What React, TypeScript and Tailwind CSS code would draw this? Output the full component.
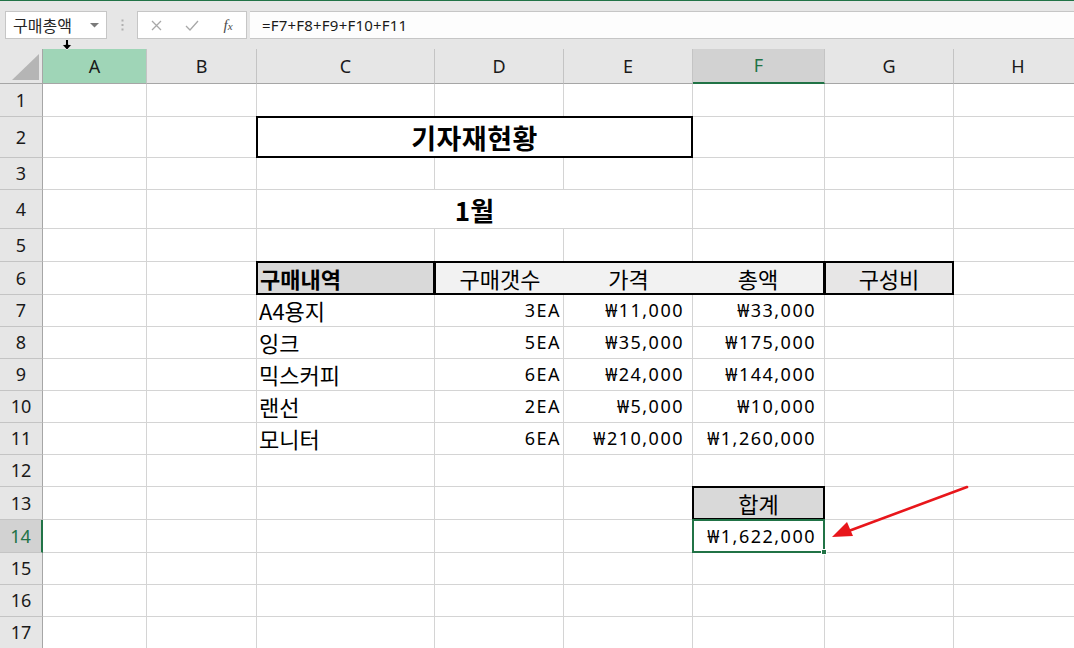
import React from 'react';

type Cell = { t: string; k: 'kr' | 'numD' | 'numE' };

const body: Record<string, Cell> = {
  '7-3': { t: 'A4용지', k: 'kr' },
  '7-4': { t: '3EA', k: 'numD' },
  '7-5': { t: '₩11,000', k: 'numE' },
  '7-6': { t: '₩33,000', k: 'numE' },
  '8-3': { t: '잉크', k: 'kr' },
  '8-4': { t: '5EA', k: 'numD' },
  '8-5': { t: '₩35,000', k: 'numE' },
  '8-6': { t: '₩175,000', k: 'numE' },
  '9-3': { t: '믹스커피', k: 'kr' },
  '9-4': { t: '6EA', k: 'numD' },
  '9-5': { t: '₩24,000', k: 'numE' },
  '9-6': { t: '₩144,000', k: 'numE' },
  '10-3': { t: '랜선', k: 'kr' },
  '10-4': { t: '2EA', k: 'numD' },
  '10-5': { t: '₩5,000', k: 'numE' },
  '10-6': { t: '₩10,000', k: 'numE' },
  '11-3': { t: '모니터', k: 'kr' },
  '11-4': { t: '6EA', k: 'numD' },
  '11-5': { t: '₩210,000', k: 'numE' },
  '11-6': { t: '₩1,260,000', k: 'numE' },
};

const cellText: Record<Cell['k'], string> = {
  kr: "justify-start pl-[2px] text-[22px] font-['Noto_Sans_CJK_KR',sans-serif]",
  numD: "justify-end pr-[2px] text-[18px] tracking-[1.5px] font-['Noto_Sans','Noto_Sans_CJK_KR',sans-serif]",
  numE: "justify-end pr-[8px] text-[18px] tracking-[1.5px] font-['Noto_Sans','Noto_Sans_CJK_KR',sans-serif]",
};

const COLS = ['', 'A', 'B', 'C', 'D', 'E', 'F', 'G', 'H'];

const GRID =
  'grid grid-cols-[43px_104px_110px_178px_129px_129px_132px_129px_129px] grid-rows-[35px_33px_41px_32px_39px_33px_33px_32px_32px_32px_32px_32px_32px_33px_33px_32px_32px_32px]';

function renderCell(r: number, c: number) {
  const key = `${r}-${c}`;
  if (r === 0 && c === 0) {
    return (
      <div key={key} className="relative bg-[#e6e6e6] border-r border-b border-r-[#a6a6a6] border-b-[#a6a6a6]">
        <svg width="42" height="34" className="absolute left-0 top-0">
          <polygon points="12,31 39,31 39,5" fill="#b5b5b5" />
        </svg>
      </div>
    );
  }
  if (r === 0) {
    let cls =
      "flex items-center justify-center bg-[#e6e6e6] border-r border-b border-r-[#c4c4c4] border-b-[#a6a6a6] text-[18px] text-[#1a1a1a] font-['Noto_Sans',sans-serif]";
    if (c === 1)
      cls =
        "flex items-center justify-center bg-[#9fd5b7] border-r border-b border-r-[#c4c4c4] border-b-[#a6a6a6] text-[18px] text-[#1a1a1a] font-['Noto_Sans',sans-serif]";
    if (c === 6)
      cls =
        "flex items-center justify-center bg-[#d2d2d2] border-r border-b-2 border-r-[#c4c4c4] border-b-[#217346] text-[18px] text-[#217346] font-['Noto_Sans',sans-serif]";
    return (
      <div key={key} className={cls}>
        {COLS[c]}
      </div>
    );
  }
  if (c === 0) {
    const cls =
      r === 14
        ? "flex items-center justify-center bg-[#d2d2d2] border-r-2 border-b border-r-[#217346] border-b-[#c4c4c4] text-[18px] text-[#217346] font-['Noto_Sans',sans-serif]"
        : "flex items-center justify-center bg-[#e6e6e6] border-r border-b border-r-[#a6a6a6] border-b-[#c4c4c4] text-[18px] text-[#1a1a1a] font-['Noto_Sans',sans-serif]";
    return (
      <div key={key} className={cls}>
        {r}
      </div>
    );
  }
  const d = body[key];
  return (
    <div
      key={key}
      className={`flex items-center bg-white border-r border-b border-[#d4d4d4] whitespace-nowrap overflow-hidden text-black ${d ? cellText[d.k] : ''}`}
    >
      {d ? d.t : null}
    </div>
  );
}

export default function App() {
  const cells: React.ReactNode[] = [];
  for (let r = 0; r < 18; r++) {
    for (let c = 0; c < 9; c++) {
      cells.push(renderCell(r, c));
    }
  }

  return (
    <div className="relative w-[1074px] h-[648px] overflow-hidden bg-white font-['Noto_Sans','Noto_Sans_CJK_KR',sans-serif]">
      {/* Formula bar */}
      <div className="h-[49px] bg-[#e6e6e6] border-t border-[#217346] flex items-start pt-[10px]">
        <div className="ml-[5px] w-[102px] h-[28px] bg-white border border-[#c6c6c6] flex items-center justify-between pl-[7px] pr-[7px]">
          <span className="text-[16px] leading-none text-[#262626] font-['Noto_Sans_CJK_KR',sans-serif]">구매총액</span>
          <svg width="9" height="5" viewBox="0 0 9 5">
            <polygon points="0,0 9,0 4.5,4.5" fill="#7a7a7a" />
          </svg>
        </div>
        <div className="w-[30px] h-[28px] flex items-center justify-center">
          <svg width="3" height="12" viewBox="0 0 3 12">
            <rect x="0.5" y="0.5" width="2" height="2" fill="#b0b0b0" />
            <rect x="0.5" y="5" width="2" height="2" fill="#b0b0b0" />
            <rect x="0.5" y="9.5" width="2" height="2" fill="#b0b0b0" />
          </svg>
        </div>
        <div className="w-[110px] h-[28px] bg-white border border-[#c6c6c6] flex items-center">
          <div className="w-[36px] h-full flex items-center justify-center">
            <svg width="11" height="11" viewBox="0 0 11 11">
              <path d="M1 1 L10 10 M10 1 L1 10" stroke="#a8a8a8" strokeWidth="1.3" fill="none" />
            </svg>
          </div>
          <div className="w-[36px] h-full flex items-center justify-center">
            <svg width="14" height="11" viewBox="0 0 14 11">
              <path d="M1 6 L5 10 L13 1" stroke="#a8a8a8" strokeWidth="1.3" fill="none" />
            </svg>
          </div>
          <div className="w-[36px] h-full flex items-center justify-center">
            <span className="italic text-[15px] leading-none text-[#4a4a4a] font-['Liberation_Serif',serif]">
              f<span className="text-[11px]">x</span>
            </span>
          </div>
        </div>
        <div className="ml-[3px] flex-1 h-[28px] bg-[#fdfdfd] border-y border-[#c6c6c6] flex items-center pl-[12px] text-[15px] tracking-[0.2px] text-[#1a1a1a] font-['Noto_Sans',sans-serif]">
          =F7+F8+F9+F10+F11
        </div>
      </div>

      {/* Sheet */}
      <div className="relative">
        <div className={GRID}>{cells}</div>

        {/* Formatting layer */}
        <div className={`absolute inset-0 pointer-events-none ${GRID}`}>
          {/* Title C2:E2 */}
          <div className="row-start-3 col-start-4 col-span-3 -mt-px -ml-px bg-white border-2 border-black flex items-center justify-center">
            <span className="text-[27px] font-bold leading-none text-black font-['Noto_Sans_CJK_KR',sans-serif] tracking-[0.5px]">기자재현황</span>
          </div>
          {/* 1월 C4:E4 */}
          <div className="row-start-5 col-start-4 col-span-3 mr-px mb-px bg-white flex items-center justify-center pt-[2px]">
            <span className="text-[26px] font-bold leading-none text-black font-['Noto_Sans_CJK_KR',sans-serif]">1월</span>
          </div>
          {/* Header row 6 */}
          <div className="row-start-7 col-start-4 -mt-px -ml-px bg-[#d9d9d9] border-2 border-black flex items-center pl-[2px]">
            <span className="text-[22px] font-bold leading-none text-black font-['Noto_Sans_CJK_KR',sans-serif]">구매내역</span>
          </div>
          <div className="row-start-7 col-start-5 col-span-3 -mt-px -ml-px bg-[#f2f2f2] border-2 border-black grid grid-cols-[128px_129px_1fr]">
            <div className="flex items-center justify-center text-[22px] leading-none text-black font-['Noto_Sans_CJK_KR',sans-serif]">구매갯수</div>
            <div className="flex items-center justify-center text-[22px] leading-none text-black font-['Noto_Sans_CJK_KR',sans-serif]">가격</div>
            <div className="flex items-center justify-center text-[22px] leading-none text-black font-['Noto_Sans_CJK_KR',sans-serif]">총액</div>
          </div>
          <div className="row-start-7 col-start-8 -mt-px -ml-px bg-[#e7e6e6] border-2 border-black flex items-center justify-center">
            <span className="text-[22px] leading-none text-black font-['Noto_Sans_CJK_KR',sans-serif]">구성비</span>
          </div>
          {/* 합계 F13 */}
          <div className="row-start-14 col-start-7 -mt-px -ml-px bg-[#d9d9d9] border-2 border-black flex items-center justify-center">
            <span className="text-[22px] leading-none text-black font-['Noto_Sans_CJK_KR',sans-serif]">합계</span>
          </div>
          {/* Selected F14 */}
          <div className="relative row-start-15 col-start-7 -mt-px -ml-px border-2 border-[#217346] bg-white flex items-center justify-end pr-[7px]">
            <span className="text-[18px] leading-none tracking-[1.5px] text-black font-['Noto_Sans','Noto_Sans_CJK_KR',sans-serif]">₩1,622,000</span>
            <div className="absolute right-[-4px] bottom-[-4px] w-[6px] h-[6px] bg-[#217346] border border-white" />
          </div>
        </div>
      </div>

      {/* Mouse cursor */}
      <svg width="12" height="12" viewBox="0 0 12 12" className="absolute left-[61px] top-[39px]">
        <path d="M4.5 0.5 H7.5 V5.5 H11 L6 11 L1 5.5 H4.5 Z" fill="#000" stroke="#fff" strokeWidth="0.8" />
      </svg>

      {/* Red annotation arrow */}
      <svg width="1074" height="648" className="absolute left-0 top-0 pointer-events-none">
        <line x1="967" y1="487" x2="846" y2="532" stroke="#e8161b" strokeWidth="2.6" strokeLinecap="round" />
        <polygon points="832,537 853,536 847,522" fill="#e8161b" />
      </svg>
    </div>
  );
}
